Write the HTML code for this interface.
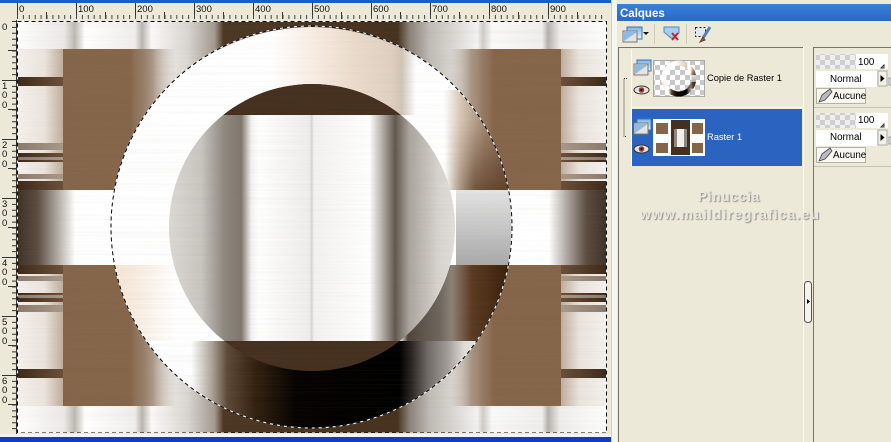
<!DOCTYPE html>
<html><head><meta charset="utf-8"><style>
html,body{margin:0;padding:0;background:#ece9d8;width:891px;height:442px;overflow:hidden}
svg{display:block}
text{font-family:"Liberation Sans",sans-serif}
</style></head><body>
<svg width="891" height="442" viewBox="0 0 891 442" xmlns="http://www.w3.org/2000/svg">
<defs>
<linearGradient id="top" gradientUnits="userSpaceOnUse" x1="17" x2="607" y1="0" y2="0">
<stop offset="0" stop-color="#fff"/><stop offset=".08" stop-color="#ece9e6"/><stop offset=".098" stop-color="#bdb8b1"/><stop offset=".115" stop-color="#fff"/><stop offset=".2" stop-color="#f0eeeb"/><stop offset=".212" stop-color="#b9b5af"/><stop offset=".228" stop-color="#fbfaf9"/><stop offset=".29" stop-color="#d9d5d0"/><stop offset=".335" stop-color="#a39a90"/><stop offset=".35" stop-color="#4c3624"/><stop offset=".645" stop-color="#46311f"/><stop offset=".665" stop-color="#8a8178"/><stop offset=".7" stop-color="#c0bcb6"/><stop offset=".78" stop-color="#f4f3f1"/><stop offset=".79" stop-color="#cfcdc9"/><stop offset=".805" stop-color="#fafafa"/><stop offset=".89" stop-color="#f0efec"/><stop offset=".9" stop-color="#b5b1ac"/><stop offset=".92" stop-color="#f0eeec"/><stop offset="1" stop-color="#fff"/>
</linearGradient>
<linearGradient id="brown" gradientUnits="userSpaceOnUse" x1="63" x2="175" y1="0" y2="0">
<stop offset="0" stop-color="#85654a"/><stop offset=".6" stop-color="#85654a"/><stop offset=".8" stop-color="#9c8570" stop-opacity=".85"/><stop offset="1" stop-color="#d8d2cb" stop-opacity=".25"/>
</linearGradient>
<linearGradient id="pale" gradientUnits="userSpaceOnUse" x1="17" x2="63" y1="0" y2="0">
<stop offset="0" stop-color="#f5f1ee"/><stop offset=".6" stop-color="#ebe4dd"/><stop offset="1" stop-color="#bfae9d"/>
</linearGradient>
<linearGradient id="darkstrip" gradientUnits="userSpaceOnUse" x1="17" x2="63" y1="0" y2="0">
<stop offset="0" stop-color="#3c2817"/><stop offset="1" stop-color="#6a4f38"/>
</linearGradient>
<linearGradient id="midstrip" gradientUnits="userSpaceOnUse" x1="17" x2="63" y1="0" y2="0">
<stop offset="0" stop-color="#8a7a6b"/><stop offset="1" stop-color="#a89888"/>
</linearGradient>
<linearGradient id="band" gradientUnits="userSpaceOnUse" x1="17" x2="75" y1="0" y2="0">
<stop offset="0" stop-color="#3f3025"/><stop offset=".35" stop-color="#5a4c40"/><stop offset=".7" stop-color="#b0aaa3"/><stop offset="1" stop-color="#fff"/>
</linearGradient>
<linearGradient id="metal" gradientUnits="userSpaceOnUse" x1="170" x2="455" y1="0" y2="0">
<stop offset="0" stop-color="#dbd8d4"/><stop offset=".11" stop-color="#c9c5c0"/><stop offset=".19" stop-color="#8f887f"/><stop offset=".25" stop-color="#7f766d"/><stop offset=".285" stop-color="#f2f1ef"/><stop offset=".31" stop-color="#fff"/><stop offset=".49" stop-color="#eeedea"/><stop offset=".497" stop-color="#d5d4d1"/><stop offset=".505" stop-color="#f3f2f0"/><stop offset=".7" stop-color="#fff"/><stop offset=".74" stop-color="#bdb8b2"/><stop offset=".79" stop-color="#62574c"/><stop offset=".84" stop-color="#aaa59e"/><stop offset=".94" stop-color="#d6d2cd"/><stop offset="1" stop-color="#e2dfdb"/>
</linearGradient>
<linearGradient id="ringA" gradientUnits="userSpaceOnUse" x1="111" x2="512" y1="0" y2="0">
<stop offset="0" stop-color="#fff"/><stop offset=".4" stop-color="#fff"/><stop offset=".5" stop-color="#f8eee4"/><stop offset=".6" stop-color="#ecdccd"/><stop offset=".7" stop-color="#dfd0c2"/><stop offset=".725" stop-color="#d2c4b6"/><stop offset=".76" stop-color="#fff"/><stop offset="1" stop-color="#fff"/>
</linearGradient>
<linearGradient id="ringR" gradientUnits="userSpaceOnUse" x1="444" x2="512" y1="0" y2="0">
<stop offset="0" stop-color="#fff"/><stop offset=".25" stop-color="#d6c6b6"/><stop offset=".6" stop-color="#a28770"/><stop offset="1" stop-color="#7f5f45"/>
</linearGradient>
<linearGradient id="ringRv" gradientUnits="userSpaceOnUse" x1="0" x2="0" y1="120" y2="190">
<stop offset="0" stop-color="#5a3a22" stop-opacity="0"/><stop offset="1" stop-color="#4a2c14" stop-opacity=".65"/>
</linearGradient>
<linearGradient id="fadeH" gradientUnits="userSpaceOnUse" x1="446" x2="475" y1="0" y2="0">
<stop offset="0" stop-color="#000"/><stop offset="1" stop-color="#fff"/>
</linearGradient>
<mask id="fadeMask" maskUnits="userSpaceOnUse" x="440" y="100" width="90" height="100"><rect x="440" y="100" width="90" height="100" fill="url(#fadeH)"/></mask>
<linearGradient id="ringC" gradientUnits="userSpaceOnUse" x1="0" x2="0" y1="190" y2="265">
<stop offset="0" stop-color="#e4e4e4"/><stop offset="1" stop-color="#a9a9a9"/>
</linearGradient>
<linearGradient id="ringD" gradientUnits="userSpaceOnUse" x1="111" x2="512" y1="0" y2="0">
<stop offset="0" stop-color="#f6e6d2"/><stop offset=".06" stop-color="#f8ecdf"/><stop offset=".16" stop-color="#fff"/><stop offset=".72" stop-color="#fff"/><stop offset=".74" stop-color="#4f4439"/><stop offset=".82" stop-color="#6e665e"/><stop offset=".85" stop-color="#8d8175"/><stop offset=".9" stop-color="#5a3b22"/><stop offset="1" stop-color="#361c07"/>
</linearGradient>
<linearGradient id="ringE" gradientUnits="userSpaceOnUse" x1="111" x2="512" y1="0" y2="0">
<stop offset="0" stop-color="#fff"/><stop offset=".2" stop-color="#fff"/><stop offset=".25" stop-color="#b0a79c"/><stop offset=".29" stop-color="#5c4938"/><stop offset=".36" stop-color="#33210f"/><stop offset=".46" stop-color="#050200"/><stop offset=".72" stop-color="#000"/><stop offset=".75" stop-color="#2c2723"/><stop offset=".79" stop-color="#6f6a65"/><stop offset=".84" stop-color="#a19d98"/><stop offset=".88" stop-color="#e0ded9"/><stop offset="1" stop-color="#fff"/>
</linearGradient>
<clipPath id="ringClip"><path clip-rule="evenodd" d="M111 227.500a200.500 200.500 0 1 0 401 0a200.500 200.500 0 1 0 -401 0zM169 227.500a143 143.500 0 1 0 286 0a143 143.500 0 1 0 -286 0z"/></clipPath>
<clipPath id="holeClip"><ellipse cx="312" cy="227.500" rx="143" ry="143.500"/></clipPath>
<clipPath id="canvasClip"><rect x="17" y="21" width="590" height="412"/></clipPath>
<pattern id="chk" width="10" height="10" patternUnits="userSpaceOnUse"><rect width="10" height="10" fill="#fff"/><rect width="5" height="5" fill="#c8c8c8"/><rect x="5" y="5" width="5" height="5" fill="#c8c8c8"/></pattern>
<pattern id="chk2" width="10" height="10" patternUnits="userSpaceOnUse"><rect width="10" height="10" fill="#eee"/><rect width="5" height="5" fill="#cfcfcf"/><rect x="5" y="5" width="5" height="5" fill="#cfcfcf"/></pattern>
<filter id="streak" x="0" y="0" width="100%" height="100%"><feTurbulence type="fractalNoise" baseFrequency="0.003 0.7" numOctaves="2" seed="4"/><feColorMatrix values="0 0 0 0 .3  0 0 0 0 .25  0 0 0 0 .2  1.3 0 0 0 -.5"/></filter>
<linearGradient id="title" x1="0" x2="0" y1="0" y2="1"><stop offset="0" stop-color="#3a80dc"/><stop offset="1" stop-color="#2a68c4"/></linearGradient>
<linearGradient id="lay" x1="0" x2="0" y1="0" y2="1"><stop offset="0" stop-color="#7fb4e6"/><stop offset="1" stop-color="#e9f2fa"/></linearGradient>
<g id="q">
<rect x="17" y="49" width="46" height="28" fill="url(#pale)"/>
<rect x="17" y="77" width="46" height="9" fill="url(#darkstrip)"/>
<rect x="17" y="86" width="46" height="57" fill="url(#pale)"/>
<rect x="17" y="143" width="46" height="7" fill="url(#midstrip)"/>
<rect x="17" y="150" width="46" height="3" fill="url(#pale)"/>
<rect x="17" y="153" width="46" height="4" fill="url(#darkstrip)"/>
<rect x="17" y="157" width="46" height="3" fill="url(#midstrip)"/>
<rect x="17" y="160" width="46" height="2" fill="url(#darkstrip)"/>
<rect x="17" y="162" width="46" height="12" fill="url(#pale)"/>
<rect x="17" y="174" width="46" height="5" fill="url(#midstrip)"/>
<rect x="17" y="179" width="46" height="2" fill="url(#pale)"/>
<rect x="17" y="181" width="46" height="9" fill="url(#darkstrip)"/>
<rect x="63" y="49" width="112" height="141" fill="url(#brown)"/>
<rect x="17" y="190" width="295" height="38" fill="url(#band)"/>
</g>
<g id="ring" clip-path="url(#ringClip)">
<rect x="100" y="20" width="420" height="95" fill="url(#ringA)"/>
<rect x="100" y="115" width="345" height="75" fill="#fff"/>
<rect x="444" y="90" width="76" height="100" fill="url(#ringR)"/>
<rect x="444" y="120" width="76" height="70" fill="url(#ringRv)" mask="url(#fadeMask)"/>
<rect x="100" y="190" width="356" height="75" fill="#fff"/>
<rect x="456" y="190" width="64" height="75" fill="url(#ringC)"/>
<rect x="100" y="265" width="420" height="76" fill="url(#ringD)"/>
<rect x="100" y="341" width="420" height="95" fill="url(#ringE)"/>
</g>
</defs>

<!-- window chrome -->
<rect width="891" height="442" fill="#ece9d8"/>
<rect x="0" y="0" width="612" height="3" fill="#1a5ccc"/>
<rect x="0" y="437" width="612" height="5" fill="#0b3fc0"/>
<rect x="0" y="434" width="612" height="3" fill="#f4f3ec"/>
<rect x="612" y="0" width="5" height="442" fill="#f7f6f0"/>
<rect x="611" y="0" width="1" height="442" fill="#d4d0c0"/>

<!-- rulers -->
<g fill="#333">
<rect x="17" y="3" width="1" height="16"/><rect x="76" y="3" width="1" height="16"/><rect x="135" y="3" width="1" height="16"/><rect x="194" y="3" width="1" height="16"/><rect x="253" y="3" width="1" height="16"/><rect x="312" y="3" width="1" height="16"/><rect x="371" y="3" width="1" height="16"/><rect x="430" y="3" width="1" height="16"/><rect x="489" y="3" width="1" height="16"/><rect x="548" y="3" width="1" height="16"/>
<rect x="46" y="12" width="1" height="7"/><rect x="105" y="12" width="1" height="7"/><rect x="164" y="12" width="1" height="7"/><rect x="223" y="12" width="1" height="7"/><rect x="282" y="12" width="1" height="7"/><rect x="341" y="12" width="1" height="7"/><rect x="400" y="12" width="1" height="7"/><rect x="459" y="12" width="1" height="7"/><rect x="518" y="12" width="1" height="7"/><rect x="577" y="12" width="1" height="7"/>
</g>
<g stroke="#444" fill="none"><line x1="17" x2="607" y1="17" y2="17" stroke-width="4" stroke-dasharray="1 4.900"/></g>
<g font-size="9.500" fill="#111">
<text x="19" y="12">0</text><text x="78" y="12">100</text><text x="137" y="12">200</text><text x="196" y="12">300</text><text x="255" y="12">400</text><text x="314" y="12">500</text><text x="373" y="12">600</text><text x="432" y="12">700</text><text x="491" y="12">800</text><text x="550" y="12">900</text>
</g>
<g stroke="#333" fill="none"><line x1="16.500" x2="16.500" y1="20" y2="434"/>
<line x1="14" x2="14" y1="21" y2="434" stroke-width="4" stroke-dasharray="1 4.900"/>
<path d="M2 80.500H16M2 139.500H16M2 198.500H16M2 257.500H16M2 316.500H16M2 375.500H16M8 50.500H16M8 109.500H16M8 168.500H16M8 227.500H16M8 286.500H16M8 345.500H16M8 404.500H16"/></g>
<g font-size="9.500" fill="#111">
<text x="2" y="30">0</text>
<text x="2" y="89">1</text><text x="2" y="98">0</text><text x="2" y="108">0</text>
<text x="2" y="148">2</text><text x="2" y="157">0</text><text x="2" y="167">0</text>
<text x="2" y="207">3</text><text x="2" y="216">0</text><text x="2" y="226">0</text>
<text x="2" y="266">4</text><text x="2" y="275">0</text><text x="2" y="285">0</text>
<text x="2" y="325">5</text><text x="2" y="334">0</text><text x="2" y="344">0</text>
<text x="2" y="384">6</text><text x="2" y="393">0</text><text x="2" y="403">0</text>
</g>

<!-- canvas -->
<g clip-path="url(#canvasClip)">
<rect x="17" y="21" width="590" height="169" fill="url(#top)"/>
<rect x="17" y="265" width="590" height="168" fill="url(#top)"/>
<use href="#q"/>
<use href="#q" transform="matrix(-1 0 0 1 624 0)"/>
<use href="#q" transform="matrix(1 0 0 -1 0 455)"/>
<use href="#q" transform="matrix(-1 0 0 -1 624 455)"/>
<use href="#ring"/>
<g clip-path="url(#holeClip)">
<rect x="160" y="80" width="300" height="35" fill="#45301f"/>
<rect x="160" y="115" width="300" height="226" fill="url(#metal)"/>
<rect x="160" y="341" width="300" height="35" fill="#45301f"/>
</g>
<rect x="17" y="21" width="590" height="412" filter="url(#streak)" opacity=".1"/>
<!-- selection -->
<g fill="none" stroke-width="1">
<ellipse cx="311.500" cy="227" rx="200.500" ry="201" stroke="#fff"/>
<ellipse cx="311.500" cy="227" rx="200.500" ry="201" stroke="#000" stroke-dasharray="4 3"/>
<rect x="17.500" y="21.500" width="589" height="411.500" stroke="#fff"/>
<rect x="17.500" y="21.500" width="589" height="411.500" stroke="#000" stroke-dasharray="4 3"/>
</g>
</g>

<!-- panel -->
<rect x="617" y="4" width="274" height="17" fill="url(#title)"/>
<text x="620" y="17" font-size="11.500" font-weight="700" fill="#fff">Calques</text>
<rect x="617" y="21" width="274" height="421" fill="#ece9d8"/>

<!-- toolbar -->
<g>
<rect x="627" y="27" width="15" height="12" fill="url(#lay)" stroke="#3b78b4"/>
<rect x="623" y="31" width="14" height="11" fill="#e4e4de" stroke="#777"/>
<path d="M624 32H637L624 41z" fill="#8dbbe6"/>
<path d="M643 32h6l-3 3z" fill="#111"/>
<rect x="654" y="24" width="1" height="20" fill="#cfccbd"/>
<path d="M664 27h15v6l-5 5h-3l-7-6z" fill="#a9cdef" stroke="#4e88c0"/>
<path d="M672 33l6 7M678 33l-6 7" stroke="#c4262a" stroke-width="2" fill="none"/>
<rect x="686" y="24" width="1" height="20" fill="#cfccbd"/>
<rect x="695.500" y="27.500" width="10" height="9" fill="#dfe9f5" stroke="#222" stroke-dasharray="2 2"/>
<path d="M710 27l-7 11" stroke="#5a7db0" stroke-width="3"/>
<path d="M703 37l-3 5 5-2z" fill="#8a5a30" stroke="#6b4424" stroke-width="1"/>
</g>

<!-- layer list frame -->
<rect x="618" y="47" width="1" height="395" fill="#77756a"/>
<rect x="618" y="47" width="186" height="1" fill="#77756a"/>
<rect x="631" y="49" width="1" height="118" fill="#fbfaf5"/>
<rect x="632" y="107" width="172" height="1" fill="#fbfaf5"/>
<rect x="632" y="109" width="170" height="57" fill="#2a63c0"/>
<path d="M627 78.500h-3v58h3" fill="none" stroke="#333" stroke-dasharray="1 1"/>

<!-- layer icons -->
<g>
<rect x="637" y="60" width="14" height="11" fill="url(#lay)" stroke="#3b78b4"/>
<rect x="634" y="64" width="14" height="11" fill="#e4e4de" stroke="#777"/>
<path d="M635 65H648L635 74z" fill="#8dbbe6"/>
<ellipse cx="641.500" cy="90" rx="7.500" ry="4" fill="#e8e2dc" stroke="#333"/><circle cx="641.500" cy="90" r="2.800" fill="#9a3a30"/><circle cx="641.500" cy="90" r="1.100" fill="#111"/>
<rect x="637" y="119" width="14" height="11" fill="url(#lay)" stroke="#3b78b4"/>
<rect x="634" y="123" width="14" height="11" fill="#e4e4de" stroke="#777"/>
<path d="M635 124H648L635 133z" fill="#8dbbe6"/>
<ellipse cx="641.500" cy="149" rx="7.500" ry="4" fill="#e8e2dc" stroke="#333"/><circle cx="641.500" cy="149" r="2.800" fill="#9a3a30"/><circle cx="641.500" cy="149" r="1.100" fill="#111"/>
</g>

<!-- thumbnail 1 -->
<rect x="653.500" y="60.500" width="51" height="36" fill="url(#chk)" stroke="#aaa"/>
<use href="#ring" transform="translate(651.500 58.100) scale(.0875 .09)"/>
<!-- thumbnail 2 -->
<rect x="653" y="119" width="52" height="37" fill="#fff"/>
<g fill="#85654a">
<rect x="656" y="123" width="12" height="11"/><rect x="692" y="123" width="11" height="11"/><rect x="656" y="143" width="12" height="10"/><rect x="692" y="143" width="11" height="10"/>
</g>
<rect x="671" y="120" width="19" height="35" fill="#45301f"/>
<rect x="674" y="129" width="13" height="18" fill="#efefec"/>
<rect x="674" y="129" width="3" height="18" fill="#8f887f"/><rect x="684" y="129" width="3" height="18" fill="#8f887f"/>
<rect x="656" y="135" width="15" height="7" fill="#fff"/><rect x="690" y="135" width="13" height="7" fill="#fff"/>

<text x="707" y="81" font-size="9.300" fill="#000">Copie de Raster 1</text>
<text x="707" y="140" font-size="9.300" fill="#fff">Raster 1</text>

<!-- splitter -->
<rect x="803" y="47" width="1" height="395" fill="#fbfaf5"/>
<rect x="813" y="47" width="1" height="395" fill="#77756a"/>
<rect x="814" y="47" width="77" height="1" fill="#77756a"/>
<rect x="804.500" y="281.500" width="7" height="41" rx="3" fill="#f5f3ea" stroke="#555"/>
<path d="M807 299l3 2.500-3 2.500z" fill="#000"/>

<!-- watermark -->
<g font-weight="700" fill="#e9e7df" stroke="none" style="filter:drop-shadow(1px 1px 0.500px #8f8d84)">
<text x="698" y="201" font-size="13.500" letter-spacing=".8">Pinuccia</text>
<text x="640" y="219" font-size="14" letter-spacing="1.100">www.maildiregrafica.eu</text>
</g>

<!-- properties -->
<g font-size="9.800" fill="#000">
<rect x="816" y="54" width="72" height="15" fill="#fff"/><rect x="816" y="54" width="40" height="15" fill="url(#chk2)"/>
<text x="858" y="65">100</text>
<path d="M884 68h-3l3-3z" fill="none" stroke="#333"/>
<rect x="816" y="71" width="61" height="16" fill="#fff"/>
<text x="830" y="82">Normal</text>
<rect x="878" y="71" width="9" height="15" fill="#f3f1e6" stroke="#aaa"/>
<path d="M880.500 75l4 3.500-4 3.500z" fill="#000"/>
<rect x="889" y="78" width="2" height="7" fill="#fff" stroke="#99a"/>
<rect x="816.500" y="88.500" width="49" height="15" fill="#f8f7f0" stroke="#b5b2a5"/>
<path d="M819 102l3-7 8-6 2 3-7 8z" fill="#bbb" stroke="#444" stroke-width=".8"/>
<text x="833" y="99">Aucune</text>

<rect x="814" y="107" width="77" height="1" fill="#c6c3b4"/>

<rect x="816" y="113" width="72" height="15" fill="#fff"/><rect x="816" y="113" width="40" height="15" fill="url(#chk2)"/>
<text x="858" y="123">100</text>
<path d="M884 127h-3l3-3z" fill="none" stroke="#333"/>
<rect x="816" y="130" width="61" height="16" fill="#fff"/>
<text x="830" y="140">Normal</text>
<rect x="878" y="130" width="9" height="15" fill="#f3f1e6" stroke="#aaa"/>
<path d="M880.500 134l4 3.500-4 3.500z" fill="#000"/>
<rect x="889" y="137" width="2" height="7" fill="#fff" stroke="#99a"/>
<rect x="816.500" y="147.500" width="49" height="15" fill="#f8f7f0" stroke="#b5b2a5"/>
<path d="M819 161l3-7 8-6 2 3-7 8z" fill="#bbb" stroke="#444" stroke-width=".8"/>
<text x="833" y="158">Aucune</text>
<rect x="814" y="166" width="77" height="1" fill="#c6c3b4"/>
</g>
</svg>
</body></html>
